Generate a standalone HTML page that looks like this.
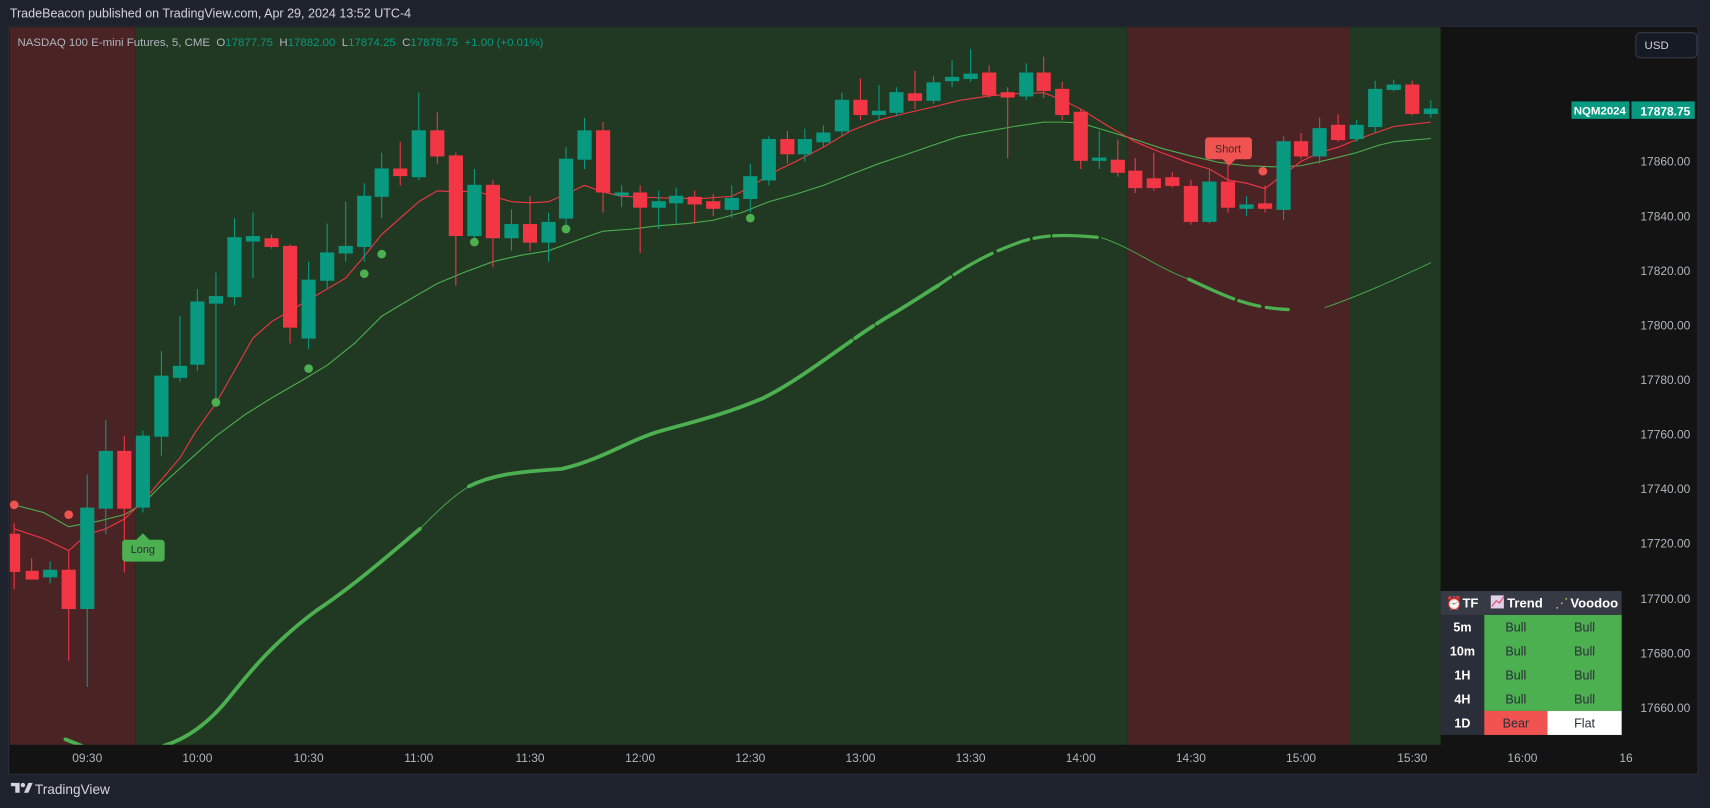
<!DOCTYPE html>
<html><head><meta charset="utf-8"><style>
html,body{margin:0;padding:0;background:#1e222d;width:1710px;height:808px;overflow:hidden}
svg{display:block}
text{font-family:"Liberation Sans","DejaVu Sans",sans-serif}
</style></head><body>
<svg width="1710" height="808" viewBox="0 0 1568 741" preserveAspectRatio="none" xmlns="http://www.w3.org/2000/svg">
<rect x="0" y="0" width="1568" height="741" fill="#1e222d"/>
<text x="9" y="16" font-size="11.5" fill="#d1d4dc">TradeBeacon published on TradingView.com, Apr 29, 2024 13:52 UTC-4</text>
<rect x="8" y="24" width="1549" height="686" fill="#131313" stroke="#2a2e39" stroke-width="1"/>
<rect x="9" y="25" width="115" height="658" fill="#4a2325"/>
<rect x="124" y="25" width="910" height="658" fill="#213822"/>
<rect x="1034" y="25" width="204" height="658" fill="#4a2325"/>
<rect x="1238" y="25" width="83" height="658" fill="#213822"/>
<text x="16" y="42" font-size="10.5" fill="#b2b5be" xml:space="preserve" style="white-space:pre">NASDAQ 100 E-mini Futures, 5, CME  O<tspan fill="#089981">17877.75</tspan>  H<tspan fill="#089981">17882.00</tspan>  L<tspan fill="#089981">17874.25</tspan>  C<tspan fill="#089981">17878.75  +1.00 (+0.01%)</tspan></text>
<defs><clipPath id="c"><rect x="9" y="25" width="1312" height="658"/></clipPath></defs>
<g clip-path="url(#c)">
<g fill="none" stroke="#4caf50" stroke-linecap="round">
<path d="M60 678 L75 684" stroke-width="3.5"/>
<path d="M150 684 C170 678 190 665 210 640 C230 615 250 590 290 560 C320 540 350 515 385 485" stroke-width="3.5"/>
<path d="M385 485 C400 470 415 455 430 446" stroke-width="0.8"/>
<path d="M430 446 C450 436 470 433 515 430 C550 422 575 405 600 397 C630 388 660 382 700 365 C740 345 780 310 820 287 C840 275 850 268 860 262" stroke-width="3.5" stroke-dasharray="380 4 20 4 2000"/>
<path d="M860 262 C880 248 900 235 930 224 C950 216 970 214 1010 218" stroke-width="3" stroke-dasharray="14 4 40 6 30 5"/>
<path d="M1010 218 C1040 228 1060 245 1090 256" stroke-width="0.8"/>
<path d="M1090 256 C1120 270 1140 280 1170 283 C1190 285 1200 284 1215 282" stroke-width="3" stroke-dasharray="45 5 20 6 20"/>
<path d="M1215 282 C1245 272 1280 256 1312 241" stroke-width="0.8"/>
</g>
<polyline fill="none" stroke="#4caf50" stroke-width="1" points="9,462 40,470 63,483 90,478 114,472 131,462 148,445 170,425 198,400 225,380 249,365 275,350 300,335 325,315 350,290 375,275 401,260 425,250 452,240 478,234 503,230 530,220 553,212 580,210 604,207 630,205 654,202 680,195 705,185 730,178 755,170 780,160 806,150 830,142 856,133 880,125 907,120 930,116 957,112 975,112 991,113 1015,120 1041,128 1065,136 1092,143 1118,149 1143,152 1168,153 1193,152 1220,146 1244,140 1265,133 1278,130 1312,127"/>
<polyline fill="none" stroke="#f23645" stroke-width="1" points="13,485 40,494 63,505 80,490 97,485 114,476 131,460 148,440 165,420 180,395 198,370 215,340 232,310 249,295 266,285 283,275 300,265 317,255 334,235 350,215 367,200 384,185 401,175 418,176 435,175 452,180 469,185 486,186 503,185 519,178 536,170 553,176 570,180 595,181 620,182 645,182 671,180 688,172 705,160 730,148 755,135 780,120 806,110 830,104 856,98 880,92 907,88 930,86 957,85 975,92 991,100 1015,115 1041,130 1065,140 1092,150 1109,155 1126,165 1143,168 1160,173 1177,160 1193,148 1210,140 1227,135 1244,128 1261,122 1278,116 1312,112"/>
<g stroke-width="1">
<g fill="#f23645" stroke="#f23645">
<line x1="13" y1="480" x2="13" y2="540"/><rect x="8" y="490" width="10" height="34"/>
<line x1="29" y1="512" x2="29" y2="530"/><rect x="24" y="524" width="11" height="7"/>
<line x1="63" y1="505" x2="63" y2="606"/><rect x="57" y="523" width="12" height="35"/>
<line x1="114" y1="400" x2="114" y2="525"/><rect x="108" y="414" width="12" height="52"/>
<line x1="249" y1="215" x2="249" y2="228"/><rect x="243" y="219" width="12" height="7"/>
<line x1="266" y1="224" x2="266" y2="315"/><rect x="260" y="226" width="12" height="74"/>
<line x1="367" y1="130" x2="367" y2="170"/><rect x="361" y="155" width="12" height="6"/>
<line x1="401" y1="103" x2="401" y2="150"/><rect x="395" y="120" width="12" height="23"/>
<line x1="418" y1="140" x2="418" y2="262"/><rect x="412" y="143" width="12" height="73"/>
<line x1="452" y1="165" x2="452" y2="245"/><rect x="446" y="170" width="12" height="48"/>
<line x1="486" y1="180" x2="486" y2="230"/><rect x="480" y="206" width="12" height="16"/>
<line x1="553" y1="112" x2="553" y2="195"/><rect x="547" y="120" width="12" height="56"/>
<line x1="587" y1="170" x2="587" y2="232"/><rect x="581" y="177" width="12" height="13"/>
<line x1="637" y1="175" x2="637" y2="205"/><rect x="631" y="181" width="12" height="6"/>
<line x1="654" y1="178" x2="654" y2="198"/><rect x="648" y="185" width="12" height="6"/>
<line x1="722" y1="120" x2="722" y2="150"/><rect x="716" y="128" width="12" height="13"/>
<line x1="789" y1="72" x2="789" y2="110"/><rect x="783" y="92" width="12" height="13"/>
<line x1="839" y1="65" x2="839" y2="100"/><rect x="833" y="86" width="12" height="6"/>
<line x1="907" y1="60" x2="907" y2="90"/><rect x="901" y="67" width="12" height="20"/>
<line x1="924" y1="80" x2="924" y2="145"/><rect x="918" y="85" width="12" height="4"/>
<line x1="957" y1="52" x2="957" y2="90"/><rect x="951" y="67" width="12" height="16"/>
<line x1="974" y1="75" x2="974" y2="110"/><rect x="968" y="82" width="12" height="23"/>
<line x1="991" y1="100" x2="991" y2="155"/><rect x="985" y="103" width="12" height="44"/>
<line x1="1025" y1="128" x2="1025" y2="162"/><rect x="1019" y="147" width="12" height="11"/>
<line x1="1041" y1="145" x2="1041" y2="177"/><rect x="1035" y="157" width="12" height="15"/>
<line x1="1058" y1="140" x2="1058" y2="175"/><rect x="1052" y="164" width="12" height="8"/>
<line x1="1075" y1="158" x2="1075" y2="172"/><rect x="1069" y="163" width="12" height="7"/>
<line x1="1092" y1="165" x2="1092" y2="206"/><rect x="1086" y="171" width="12" height="32"/>
<line x1="1126" y1="150" x2="1126" y2="195"/><rect x="1120" y="167" width="12" height="23"/>
<line x1="1160" y1="170" x2="1160" y2="195"/><rect x="1154" y="187" width="12" height="4"/>
<line x1="1193" y1="122" x2="1193" y2="146"/><rect x="1187" y="130" width="12" height="13"/>
<line x1="1227" y1="105" x2="1227" y2="130"/><rect x="1221" y="115" width="12" height="13"/>
<line x1="1295" y1="74" x2="1295" y2="106"/><rect x="1289" y="78" width="12" height="26"/>
</g>
<g fill="#089981" stroke="#089981">
<line x1="46" y1="515" x2="46" y2="535"/><rect x="40" y="523" width="12" height="6"/>
<line x1="80" y1="435" x2="80" y2="630"/><rect x="74" y="466" width="12" height="92"/>
<line x1="97" y1="385" x2="97" y2="490"/><rect x="91" y="414" width="12" height="52"/>
<line x1="131" y1="395" x2="131" y2="470"/><rect x="125" y="400" width="12" height="65"/>
<line x1="148" y1="322" x2="148" y2="418"/><rect x="142" y="345" width="12" height="55"/>
<line x1="165" y1="290" x2="165" y2="350"/><rect x="159" y="336" width="12" height="10"/>
<line x1="181" y1="265" x2="181" y2="340"/><rect x="175" y="277" width="12" height="57"/>
<line x1="198" y1="250" x2="198" y2="365"/><rect x="192" y="272" width="12" height="6"/>
<line x1="215" y1="200" x2="215" y2="280"/><rect x="209" y="218" width="12" height="54"/>
<line x1="232" y1="195" x2="232" y2="255"/><rect x="226" y="217" width="12" height="4"/>
<line x1="283" y1="240" x2="283" y2="320"/><rect x="277" y="257" width="12" height="53"/>
<line x1="300" y1="205" x2="300" y2="265"/><rect x="294" y="232" width="12" height="25"/>
<line x1="317" y1="185" x2="317" y2="240"/><rect x="311" y="226" width="12" height="6"/>
<line x1="334" y1="168" x2="334" y2="240"/><rect x="328" y="180" width="12" height="46"/>
<line x1="350" y1="140" x2="350" y2="200"/><rect x="344" y="155" width="12" height="25"/>
<line x1="384" y1="85" x2="384" y2="165"/><rect x="378" y="120" width="12" height="42"/>
<line x1="435" y1="155" x2="435" y2="225"/><rect x="429" y="170" width="12" height="46"/>
<line x1="469" y1="192" x2="469" y2="230"/><rect x="463" y="206" width="12" height="12"/>
<line x1="503" y1="195" x2="503" y2="240"/><rect x="497" y="204" width="12" height="18"/>
<line x1="519" y1="135" x2="519" y2="210"/><rect x="513" y="146" width="12" height="54"/>
<line x1="536" y1="108" x2="536" y2="155"/><rect x="530" y="120" width="12" height="26"/>
<line x1="570" y1="170" x2="570" y2="190"/><rect x="564" y="177" width="12" height="2"/>
<line x1="604" y1="175" x2="604" y2="210"/><rect x="598" y="185" width="12" height="5"/>
<line x1="620" y1="172" x2="620" y2="205"/><rect x="614" y="180" width="12" height="6"/>
<line x1="671" y1="170" x2="671" y2="200"/><rect x="665" y="182" width="12" height="10"/>
<line x1="688" y1="150" x2="688" y2="195"/><rect x="682" y="162" width="12" height="20"/>
<line x1="705" y1="125" x2="705" y2="170"/><rect x="699" y="128" width="12" height="37"/>
<line x1="738" y1="118" x2="738" y2="148"/><rect x="732" y="128" width="12" height="13"/>
<line x1="755" y1="115" x2="755" y2="135"/><rect x="749" y="122" width="12" height="8"/>
<line x1="772" y1="85" x2="772" y2="125"/><rect x="766" y="92" width="12" height="28"/>
<line x1="806" y1="78" x2="806" y2="110"/><rect x="800" y="102" width="12" height="3"/>
<line x1="822" y1="80" x2="822" y2="106"/><rect x="816" y="85" width="12" height="18"/>
<line x1="856" y1="70" x2="856" y2="95"/><rect x="850" y="76" width="12" height="16"/>
<line x1="873" y1="55" x2="873" y2="80"/><rect x="867" y="71" width="12" height="3"/>
<line x1="890" y1="45" x2="890" y2="75"/><rect x="884" y="68" width="12" height="4"/>
<line x1="941" y1="58" x2="941" y2="92"/><rect x="935" y="67" width="12" height="21"/>
<line x1="1008" y1="120" x2="1008" y2="155"/><rect x="1002" y="145" width="12" height="2"/>
<line x1="1109" y1="155" x2="1109" y2="205"/><rect x="1103" y="167" width="12" height="36"/>
<line x1="1143" y1="180" x2="1143" y2="198"/><rect x="1137" y="188" width="12" height="3"/>
<line x1="1177" y1="125" x2="1177" y2="202"/><rect x="1171" y="130" width="12" height="62"/>
<line x1="1210" y1="108" x2="1210" y2="150"/><rect x="1204" y="118" width="12" height="25"/>
<line x1="1244" y1="110" x2="1244" y2="130"/><rect x="1238" y="115" width="12" height="12"/>
<line x1="1261" y1="74" x2="1261" y2="122"/><rect x="1255" y="82" width="12" height="34"/>
<line x1="1278" y1="73" x2="1278" y2="84"/><rect x="1272" y="78" width="12" height="4"/>
<line x1="1312" y1="92" x2="1312" y2="108"/><rect x="1306" y="100" width="12" height="4"/>
</g>
</g>
<g fill="#4caf50">
<circle cx="198" cy="369" r="4"/><circle cx="283" cy="338" r="4"/><circle cx="334" cy="251" r="4"/><circle cx="350" cy="233" r="4"/><circle cx="435" cy="222" r="4"/><circle cx="519" cy="210" r="4"/><circle cx="688" cy="200" r="4"/>
</g>
<g fill="#f05350">
<circle cx="13" cy="463" r="4"/><circle cx="63" cy="472" r="4"/><circle cx="1158" cy="157" r="4"/>
</g>
<path d="M112 495 H125 L131 489 L137 495 H148 a3 3 0 0 1 3 3 V512 a3 3 0 0 1 -3 3 H115 a3 3 0 0 1 -3 -3 V498 a3 3 0 0 1 3 -3z" fill="#4caf50"/>
<text x="131" y="507" font-size="10" fill="#2a2e39" text-anchor="middle">Long</text>
<path d="M1108 126 H1145 a3 3 0 0 1 3 3 V143 a3 3 0 0 1 -3 3 H1133 L1127 152 L1121 146 H1108 a3 3 0 0 1 -3 -3 V129 a3 3 0 0 1 3 -3z" fill="#f05350"/>
<text x="1126" y="140" font-size="10" fill="#3a2a2e" text-anchor="middle">Short</text>
</g>
<g font-size="11" fill="#b2b5be" text-anchor="end">
<text x="1550" y="152">17860.00</text><text x="1550" y="202">17840.00</text><text x="1550" y="252">17820.00</text><text x="1550" y="302">17800.00</text><text x="1550" y="352">17780.00</text><text x="1550" y="402">17760.00</text><text x="1550" y="452">17740.00</text><text x="1550" y="502">17720.00</text><text x="1550" y="553">17700.00</text><text x="1550" y="603">17680.00</text><text x="1550" y="653">17660.00</text>
</g>
<rect x="1500" y="30" width="56" height="23" rx="4" fill="#161a25" stroke="#363a45"/>
<text x="1508" y="45" font-size="10.5" fill="#d1d4dc">USD</text>
<rect x="1441" y="93" width="53" height="16" fill="#089981"/>
<text x="1467" y="105" font-size="10.5" fill="#fff" text-anchor="middle" font-weight="bold">NQM2024</text>
<rect x="1496" y="93" width="58" height="16" fill="#089981"/>
<text x="1550" y="106" font-size="11" fill="#fff" text-anchor="end" font-weight="bold">17878.75</text>
<g font-size="11" fill="#b2b5be" text-anchor="middle">
<text x="80" y="699">09:30</text><text x="181" y="699">10:00</text><text x="283" y="699">10:30</text><text x="384" y="699">11:00</text><text x="486" y="699">11:30</text><text x="587" y="699">12:00</text><text x="688" y="699">12:30</text><text x="789" y="699">13:00</text><text x="890" y="699">13:30</text><text x="991" y="699">14:00</text><text x="1092" y="699">14:30</text><text x="1193" y="699">15:00</text><text x="1295" y="699">15:30</text><text x="1396" y="699">16:00</text><text x="1491" y="699">16</text>
</g>
<rect x="1321" y="542" width="166" height="22" fill="#363a45"/>
<rect x="1321" y="564" width="40" height="110" fill="#2a2e39"/>
<rect x="1361" y="564" width="126" height="88" fill="#4caf50"/>
<rect x="1361" y="652" width="58" height="22" fill="#f05350"/>
<rect x="1419" y="652" width="68" height="22" fill="#ffffff"/>
<g font-size="12" font-weight="bold" fill="#fff">
<text x="1326" y="557" font-weight="normal">⏰</text><text x="1341" y="557">TF</text>
<rect x="1367" y="546" width="12" height="12" fill="#e0d0e8"/><path d="M1368 556 L1372 551 L1375 553 L1379 547" stroke="#e04060" fill="none"/>
<text x="1382" y="557">Trend</text>
<text x="1426" y="557" font-weight="normal" fill="#e0c060">⋰</text><text x="1440" y="557">Voodoo</text>
</g>
<g font-size="11.5" font-weight="bold" fill="#fff" text-anchor="middle">
<text x="1341" y="579">5m</text><text x="1341" y="601">10m</text><text x="1341" y="623">1H</text><text x="1341" y="645">4H</text><text x="1341" y="667">1D</text>
</g>
<g font-size="11.5" fill="#2a2e39" text-anchor="middle">
<text x="1390" y="579">Bull</text><text x="1453" y="579">Bull</text>
<text x="1390" y="601">Bull</text><text x="1453" y="601">Bull</text>
<text x="1390" y="623">Bull</text><text x="1453" y="623">Bull</text>
<text x="1390" y="645">Bull</text><text x="1453" y="645">Bull</text>
<text x="1390" y="667">Bear</text><text x="1453" y="667">Flat</text>
</g>
<g fill="#d1d4dc">
<path d="M10 718 H18 V727 H14 V721 H10z"/><circle cx="21" cy="720" r="2"/><path d="M22 727 L26 718 H30 L26 727z"/>
</g>
<text x="32" y="728" font-size="12.5" fill="#d1d4dc">TradingView</text>
</svg>
</body></html>
